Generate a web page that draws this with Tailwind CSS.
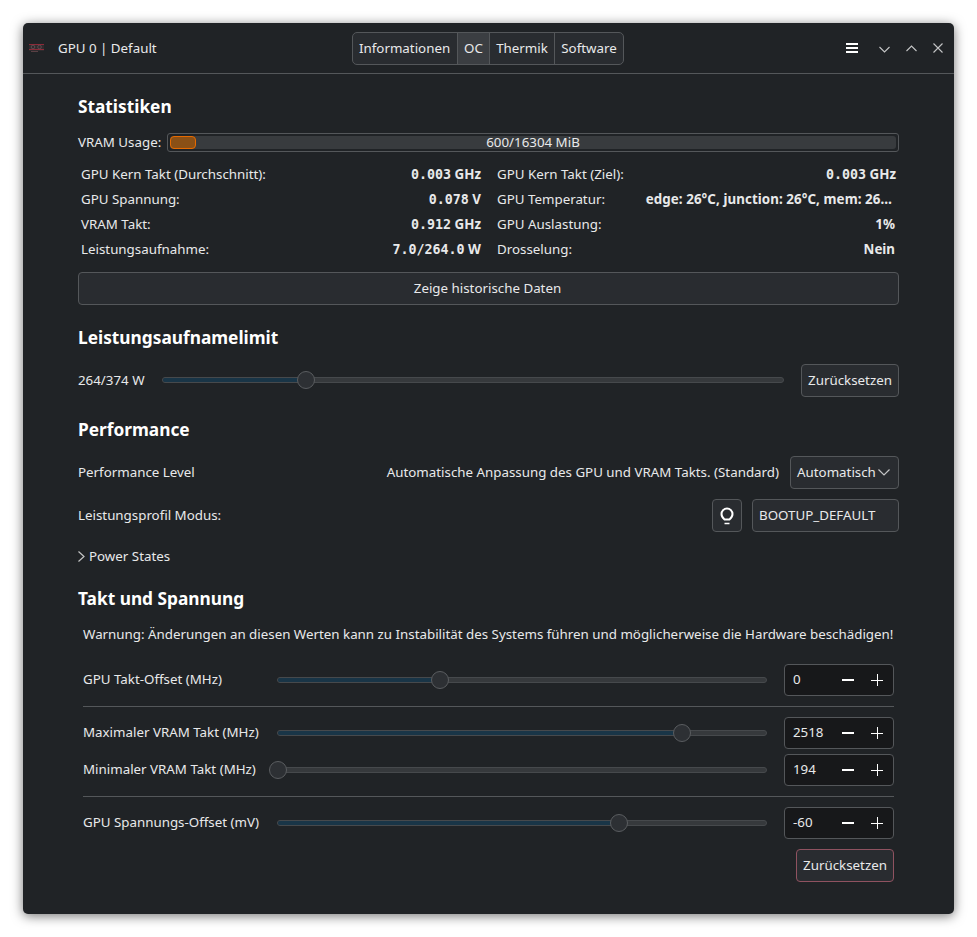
<!DOCTYPE html>
<html lang="de">
<head>
  <meta charset="UTF-8">
  <title>GPU 0 | Default</title>
  <script src="https://cdn.jsdelivr.net/npm/@tailwindcss/browser@4"></script>
</head>
<body class="bg-white h-[937px] overflow-hidden font-['Noto_Sans',sans-serif] text-[13.33px] text-[#e8e9ea]">
  <div class="ml-[23px] mt-[23px] w-[931px] h-[891px] rounded-[5px] bg-[#202326] shadow-[0_2px_12px_rgba(0,0,0,0.55)] flex flex-col">

    <!-- titlebar -->
    <header class="relative h-[51px] shrink-0 flex items-center border-b border-[#54575a]">
      <svg class="ml-[6px] w-[16px] h-[12px]" viewBox="0 0 16 12" fill="none">
        <rect x="0" y="2" width="15" height="7" fill="#2f2b2e"/>
        <path d="M0 2.5h15M0 7.5h15" stroke="#8c2a38"/>
        <circle cx="4" cy="5" r="1.8" stroke="#6a5257" stroke-width="0.8"/>
        <circle cx="10.5" cy="5" r="1.8" stroke="#6a5257" stroke-width="0.8"/>
        <path d="M2 9.5h7" stroke="#5a4044"/>
      </svg>
      <span class="ml-[13px] pt-[2px]">GPU 0 | Default</span>
      <nav class="absolute left-[329px] top-[9px] h-[33px] flex rounded-[5px] border border-[#54575a] bg-[#292c30]">
        <div class="w-[104px] pl-[6px] flex items-center">Informationen</div>
        <div class="w-[32px] justify-center flex items-center border-l border-[#54575a] bg-[#3b3e42]">OC</div>
        <div class="w-[65px] justify-center flex items-center border-l border-[#54575a]">Thermik</div>
        <div class="w-[69px] justify-center flex items-center border-l border-[#54575a]">Software</div>
      </nav>
      <div class="ml-auto flex items-center h-full">
        <svg class="w-[12px] h-[10px] mr-[21px]" viewBox="0 0 12 10" fill="#ffffff"><rect width="12" height="2"/><rect y="4" width="12" height="2"/><rect y="8" width="12" height="2"/></svg>
        <svg class="w-[11px] h-[7px] mr-[16px] mt-[2px]" viewBox="0 0 11 7" fill="none" stroke="#c4c5c6" stroke-width="1.1"><path d="M.5 1l5 5 5-5"/></svg>
        <svg class="w-[11px] h-[7px] mr-[16px]" viewBox="0 0 11 7" fill="none" stroke="#c4c5c6" stroke-width="1.1"><path d="M.5 6l5-5 5 5"/></svg>
        <svg class="w-[10px] h-[10px] mr-[11px]" viewBox="0 0 10 10" fill="none" stroke="#c4c5c6" stroke-width="1.1"><path d="M.5.5l9 9M9.5.5l-9 9"/></svg>
      </div>
    </header>

    <main class="px-[55px] flex flex-col">
      <h2 class="mt-[20px] h-[24px] leading-[26px] text-[17.3px] font-bold text-white">Statistiken</h2>

      <div class="mt-[15px] h-[19px] flex items-center">
        <span class="w-[89px]">VRAM Usage:</span>
        <div class="relative flex-1 h-[19px] rounded-[3px] border border-[#54575a] bg-[#202326] p-[2px]">
          <div class="relative h-[13px] rounded-[3px] bg-[#383b3e]">
            <div class="w-[26px] h-[13px] rounded-[4px] border border-[#e66a00] bg-[#8a5016]"></div>
          </div>
          <span class="absolute inset-0 flex items-center justify-center">600/16304 MiB</span>
        </div>
      </div>

      <div class="mt-[10px] pl-[3px] pr-[3px] grid grid-cols-[400px_399px] gap-x-[16px]">
        <div class="flex justify-between h-[25px] items-center"><span>GPU Kern Takt (Durchschnitt):</span><b class="font-bold"><span class="font-['DejaVu_Sans_Mono',monospace]">0.003</span> GHz</b></div>
        <div class="flex justify-between h-[25px] items-center"><span>GPU Kern Takt (Ziel):</span><b class="font-bold"><span class="font-['DejaVu_Sans_Mono',monospace]">0.003</span> GHz</b></div>
        <div class="flex justify-between h-[25px] items-center"><span>GPU Spannung:</span><b class="font-bold"><span class="font-['DejaVu_Sans_Mono',monospace]">0.078</span> V</b></div>
        <div class="flex justify-between h-[25px] items-center"><span>GPU Temperatur:</span><b class="font-bold pr-[4px] tracking-[0.08px]">edge: 26°C, junction: 26°C, mem: 26…</b></div>
        <div class="flex justify-between h-[25px] items-center"><span>VRAM Takt:</span><b class="font-bold"><span class="font-['DejaVu_Sans_Mono',monospace]">0.912</span> GHz</b></div>
        <div class="flex justify-between h-[25px] items-center"><span>GPU Auslastung:</span><b class="font-bold pr-px">1%</b></div>
        <div class="flex justify-between h-[25px] items-center"><span>Leistungsaufnahme:</span><b class="font-bold"><span class="font-['DejaVu_Sans_Mono',monospace]">7.0/264.0</span> W</b></div>
        <div class="flex justify-between h-[25px] items-center"><span>Drosselung:</span><b class="font-bold pr-px">Nein</b></div>
      </div>

      <button class="mt-[10px] h-[33px] pr-[2px] rounded-[4px] border border-[#54575a] bg-[#292c30]">Zeige historische Daten</button>

      <h2 class="mt-[20px] h-[24px] leading-[26px] text-[17.3px] font-bold text-white">Leistungsaufnamelimit</h2>

      <div class="mt-[15px] h-[33px] flex items-center">
        <span class="w-[84px]">264/374 W</span>
        <div class="relative w-[622px] h-[6px] mb-[2px] rounded-full border border-[#46494c] bg-[#36393c]">
          <div class="w-[144px] h-[4px] rounded-l-full bg-[#193547]"></div>
          <div class="absolute left-[134px] top-[-7px] w-[18px] h-[18px] rounded-full border border-[#5a5d60] bg-[#2d3034]"></div>
        </div>
        <button class="ml-auto w-[98px] h-[33px] rounded-[4px] border border-[#54575a] bg-[#292c30]">Zurücksetzen</button>
      </div>

      <h2 class="mt-[20px] h-[24px] leading-[26px] text-[17.3px] font-bold text-white">Performance</h2>

      <div class="mt-[15px] h-[33px] flex items-center">
        <span>Performance Level</span>
        <span class="ml-auto">Automatische Anpassung des GPU und VRAM Takts. (Standard)</span>
        <div class="ml-[11px] w-[109px] h-[33px] flex items-center justify-between pl-[6px] pr-[8px] rounded-[4px] border border-[#54575a] bg-[#292c30]">
          <span>Automatisch</span>
          <svg class="w-[12px] h-[7px] shrink-0" viewBox="0 0 12 7" fill="none" stroke="#c4c5c6" stroke-width="1.2"><path d="M.5.5l5.5 5.5 5.5-5.5"/></svg>
        </div>
      </div>

      <div class="mt-[10px] h-[33px] flex items-center">
        <span>Leistungsprofil Modus:</span>
        <div class="ml-auto w-[30px] h-[33px] flex items-center justify-center rounded-[4px] border border-[#54575a] bg-[#292c30]">
          <svg class="w-[14px] h-[18px]" viewBox="0 0 14 18" fill="none" stroke="#ffffff" stroke-width="2"><path d="M4.5 12.5C3 11.3 1.5 9.8 1.5 7a5.5 5.5 0 0 1 11 0c0 2.8-1.5 4.3-3 5.5z"/><path d="M4.5 16.5h5" stroke-width="1.5"/></svg>
        </div>
        <div class="ml-[10px] w-[147px] h-[33px] flex items-center pl-[6px] rounded-[4px] border border-[#54575a] bg-[#292c30]">BOOTUP_DEFAULT</div>
      </div>

      <div class="mt-[14px] h-[20px] flex items-center">
        <svg class="w-[7px] h-[11px] mr-[4px]" viewBox="0 0 7 11" fill="none" stroke="#c4c5c6" stroke-width="1.2"><path d="M.5.5l5.5 5-5.5 5"/></svg>
        <span class="pt-[2px]">Power States</span>
      </div>

      <h2 class="mt-[20px] h-[24px] leading-[26px] text-[17.3px] font-bold text-white">Takt und Spannung</h2>

      <div class="px-[5px] flex flex-col">
        <p class="mt-[14px] h-[20px] leading-[20px]">Warnung: Änderungen an diesen Werten kann zu Instabilität des Systems führen und möglicherweise die Hardware beschädigen!</p>

        <div class="mt-[20px] h-[32px] flex items-center">
          <span class="w-[194px]">GPU Takt-Offset (MHz)</span>
          <div class="relative w-[490px] h-[6px] rounded-full border border-[#46494c] bg-[#36393c]">
            <div class="w-[163px] h-[4px] rounded-l-full bg-[#193547]"></div>
            <div class="absolute left-[153px] top-[-7px] w-[18px] h-[18px] rounded-full border border-[#5a5d60] bg-[#2d3034]"></div>
          </div>
          <div class="ml-auto w-[110px] h-[32px] flex items-center rounded-[4px] border border-[#54575a] bg-[#17181a]">
            <span class="w-[57px] pl-[8px]">0</span>
            <svg class="w-[12px] h-[12px]" viewBox="0 0 12 12" fill="#fff"><rect y="5" width="12" height="2"/></svg>
            <svg class="ml-[17px] w-[12px] h-[12px]" viewBox="0 0 12 12" stroke="#fff"><path d="M0 6.5h12M6.5 0v12"/></svg>
          </div>
        </div>

        <div class="mt-[10px] h-px bg-[#54575a]"></div>

        <div class="mt-[10px] h-[32px] flex items-center">
          <span class="w-[194px]">Maximaler VRAM Takt (MHz)</span>
          <div class="relative w-[490px] h-[6px] rounded-full border border-[#46494c] bg-[#36393c]">
            <div class="w-[405px] h-[4px] rounded-l-full bg-[#193547]"></div>
            <div class="absolute left-[395px] top-[-7px] w-[18px] h-[18px] rounded-full border border-[#5a5d60] bg-[#2d3034]"></div>
          </div>
          <div class="ml-auto w-[110px] h-[32px] flex items-center rounded-[4px] border border-[#54575a] bg-[#17181a]">
            <span class="w-[57px] pl-[8px]">2518</span>
            <svg class="w-[12px] h-[12px]" viewBox="0 0 12 12" fill="#fff"><rect y="5" width="12" height="2"/></svg>
            <svg class="ml-[17px] w-[12px] h-[12px]" viewBox="0 0 12 12" stroke="#fff"><path d="M0 6.5h12M6.5 0v12"/></svg>
          </div>
        </div>

        <div class="mt-[5px] h-[32px] flex items-center">
          <span class="w-[194px]">Minimaler VRAM Takt (MHz)</span>
          <div class="relative w-[490px] h-[6px] rounded-full border border-[#46494c] bg-[#36393c]">
            <div class="absolute left-[-9px] top-[-7px] w-[18px] h-[18px] rounded-full border border-[#5a5d60] bg-[#2d3034]"></div>
          </div>
          <div class="ml-auto w-[110px] h-[32px] flex items-center rounded-[4px] border border-[#54575a] bg-[#17181a]">
            <span class="w-[57px] pl-[8px]">194</span>
            <svg class="w-[12px] h-[12px]" viewBox="0 0 12 12" fill="#fff"><rect y="5" width="12" height="2"/></svg>
            <svg class="ml-[17px] w-[12px] h-[12px]" viewBox="0 0 12 12" stroke="#fff"><path d="M0 6.5h12M6.5 0v12"/></svg>
          </div>
        </div>

        <div class="mt-[10px] h-px bg-[#54575a]"></div>

        <div class="mt-[10px] h-[32px] flex items-center">
          <span class="w-[194px]">GPU Spannungs-Offset (mV)</span>
          <div class="relative w-[490px] h-[6px] rounded-full border border-[#46494c] bg-[#36393c]">
            <div class="w-[342px] h-[4px] rounded-l-full bg-[#193547]"></div>
            <div class="absolute left-[332px] top-[-7px] w-[18px] h-[18px] rounded-full border border-[#5a5d60] bg-[#2d3034]"></div>
          </div>
          <div class="ml-auto w-[110px] h-[32px] flex items-center rounded-[4px] border border-[#54575a] bg-[#17181a]">
            <span class="w-[57px] pl-[8px]">-60</span>
            <svg class="w-[12px] h-[12px]" viewBox="0 0 12 12" fill="#fff"><rect y="5" width="12" height="2"/></svg>
            <svg class="ml-[17px] w-[12px] h-[12px]" viewBox="0 0 12 12" stroke="#fff"><path d="M0 6.5h12M6.5 0v12"/></svg>
          </div>
        </div>

        <button class="mt-[10px] self-end w-[98px] h-[33px] rounded-[4px] border border-[#8f5260] bg-[#292c30]">Zurücksetzen</button>
      </div>
    </main>
  </div>
</body>
</html>
